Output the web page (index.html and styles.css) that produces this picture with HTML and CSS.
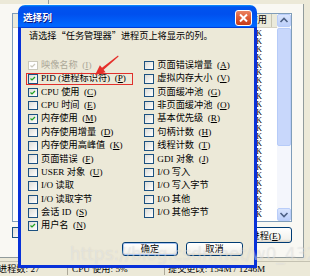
FILE: index.html
```html
<!DOCTYPE html>
<html lang="zh-CN">
<head>
    <meta charset="UTF-8">
    <title>选择列</title>
    <link rel="stylesheet" href="styles.css">
</head>
<body>
    <!-- Task manager window behind the dialog -->
    <div class="taskmgr">
        <div class="tabs"><span class="tab"></span></div>
        <div class="page">
            <div class="proc-list">
                <div class="list-main">
                    <div class="list-head"><span class="col-mem">内存使用</span><span class="col-next"></span></div>
                    <div class="list-rows">
                        <div class="row">3,120 K</div>
                        <div class="row">1,884 K</div>
                        <div class="row">22,516 K</div>
                        <div class="row">4,032 K</div>
                        <div class="row">268 K</div>
                        <div class="row">5,904 K</div>
                        <div class="row">2,412 K</div>
                        <div class="row">1,156 K</div>
                        <div class="row">7,368 K</div>
                        <div class="row">3,588 K</div>
                        <div class="row">18,240 K</div>
                        <div class="row">4,816 K</div>
                        <div class="row">940 K</div>
                        <div class="row">2,736 K</div>
                        <div class="row">6,104 K</div>
                        <div class="row">1,492 K</div>
                        <div class="row">3,012 K</div>
                        <div class="row">12,660 K</div>
                        <div class="row">2,200 K</div>
                        <div class="row">1,708 K</div>
                        <div class="row">5,520 K</div>
                        <div class="row">884 K</div>
                        <div class="row">3,344 K</div>
                        <div class="row">1,076 K</div>
                    </div>
                </div>
                <div class="scrollbar">
                    <div class="sb-btn"><svg width="14" height="13" viewBox="0 0 14 13"><path d="M3.5 8 L7 4.5 L10.5 8" fill="none" stroke="#4d6185" stroke-width="1.6"/></svg></div>
                    <div class="sb-track"><div class="sb-thumb"></div></div>
                    <div class="sb-btn"><svg width="14" height="13" viewBox="0 0 14 13"><path d="M3.5 5 L7 8.5 L10.5 5" fill="none" stroke="#4d6185" stroke-width="1.6"/></svg></div>
                </div>
            </div>
            <div class="page-foot">
                <span class="box"></span>
                <button type="button" class="xp-btn end-proc">结束进程(<u>E</u>)</button>
            </div>
        </div>
        <div class="statusbar">
            <span class="panel p-count">进程数: 27</span>
            <span class="panel p-cpu">CPU 使用: 5%</span>
            <span class="panel p-mem">提交更改: 154M / 1246M</span>
        </div>
    </div>

    <!-- 选择列 dialog -->
    <div class="dialog">
        <div class="dlg-title">
            <span class="dlg-title-text">选择列</span>
            <span class="dlg-close"><svg width="15" height="14" viewBox="0 0 15 14"><path d="M4 3.5 L11 10.5 M11 3.5 L4 10.5" stroke="#fff" stroke-width="2"/></svg></span>
        </div>
        <div class="dlg-body">
            <div class="intro">请选择<span class="q">“</span>任务管理器<span class="q">”</span>进程页上将显示的列。</div>
            <div class="options">
                <div class="opt disabled"><span class="box"><svg viewBox="0 0 10 10"><path d="M2 4.6 L4 6.6 L8 2.6" fill="none" stroke="#cac8bb" stroke-width="1.7"/></svg></span>映像名称<span class="key">(<u>I</u>)</span></div>
                <div class="opt"><span class="box"><svg viewBox="0 0 10 10"><path d="M2 4.6 L4 6.6 L8 2.6" fill="none" stroke="#21a121" stroke-width="1.7"/></svg></span>PID (进程标识符)<span class="key">(<u>P</u>)</span></div>
                <div class="opt"><span class="box"><svg viewBox="0 0 10 10"><path d="M2 4.6 L4 6.6 L8 2.6" fill="none" stroke="#21a121" stroke-width="1.7"/></svg></span>CPU 使用<span class="key">(<u>C</u>)</span></div>
                <div class="opt"><span class="box"></span>CPU 时间<span class="key">(<u>E</u>)</span></div>
                <div class="opt"><span class="box"><svg viewBox="0 0 10 10"><path d="M2 4.6 L4 6.6 L8 2.6" fill="none" stroke="#21a121" stroke-width="1.7"/></svg></span>内存使用<span class="key">(<u>M</u>)</span></div>
                <div class="opt"><span class="box"></span>内存使用增量<span class="key">(<u>D</u>)</span></div>
                <div class="opt"><span class="box"></span>内存使用高峰值<span class="key">(<u>K</u>)</span></div>
                <div class="opt"><span class="box"></span>页面错误<span class="key">(<u>F</u>)</span></div>
                <div class="opt"><span class="box"></span>USER 对象<span class="key">(<u>U</u>)</span></div>
                <div class="opt"><span class="box"></span>I/O 读取</div>
                <div class="opt"><span class="box"></span>I/O 读取字节</div>
                <div class="opt"><span class="box"></span>会话 ID<span class="key">(<u>S</u>)</span></div>
                <div class="opt"><span class="box"><svg viewBox="0 0 10 10"><path d="M2 4.6 L4 6.6 L8 2.6" fill="none" stroke="#21a121" stroke-width="1.7"/></svg></span>用户名<span class="key">(<u>N</u>)</span></div>

                <div class="opt"><span class="box"></span>页面错误增量<span class="key">(<u>A</u>)</span></div>
                <div class="opt"><span class="box"></span>虚拟内存大小<span class="key">(<u>V</u>)</span></div>
                <div class="opt"><span class="box"></span>页面缓冲池<span class="key">(<u>G</u>)</span></div>
                <div class="opt"><span class="box"></span>非页面缓冲池<span class="key">(<u>O</u>)</span></div>
                <div class="opt"><span class="box"></span>基本优先级<span class="key">(<u>R</u>)</span></div>
                <div class="opt"><span class="box"></span>句柄计数<span class="key">(<u>H</u>)</span></div>
                <div class="opt"><span class="box"></span>线程计数<span class="key">(<u>T</u>)</span></div>
                <div class="opt"><span class="box"></span>GDI 对象<span class="key">(<u>J</u>)</span></div>
                <div class="opt"><span class="box"></span>I/O 写入</div>
                <div class="opt"><span class="box"></span>I/O 写入字节</div>
                <div class="opt"><span class="box"></span>I/O 其他</div>
                <div class="opt"><span class="box"></span>I/O 其他字节</div>
            </div>
            <div class="dlg-buttons">
                <button type="button" class="xp-btn ok">确定</button>
                <button type="button" class="xp-btn cancel">取消</button>
            </div>
        </div>
    </div>

    <!-- Annotation marks -->
    <div class="mark-box"></div>
    <svg class="mark-arrow" width="32" height="24" viewBox="0 0 32 24">
        <polygon points="3,22 7.9,12.2 10,14.7 26,2.6 26.6,3.4 11.6,16.7 13.6,19.2" fill="#e5302b"/>
    </svg>
    <div class="watermark">https://blog.csdn.net/w0_43216</div>
</body>
</html>
```

FILE: styles.css
```css
* {
    box-sizing: border-box;
}
html, body {
    margin: 0;
}
body {
    position: relative;
    width: 310px;
    height: 276px;
    overflow: hidden;
    background: #ece9d8;
    font-family: "Liberation Serif", "Noto Sans CJK SC", serif;
    font-size: 9.2px;
    color: #000;
    text-autospace: no-autospace;
}
u {
    text-decoration-thickness: 1px;
}
.key {
    font-family: "Liberation Serif", serif;
    margin-left: 1px;
}

/* Task manager behind */
.taskmgr {
    display: flex;
    flex-direction: column;
    height: 276px;
}
.tabs {
    height: 4px;
}
.tab {
    display: block;
    width: 49px;
    height: 4px;
    border-right: 1px solid #919b9c;
}
.page {
    height: 254px;
    margin-right: 6px;
    padding: 9px 0 0 12px;
    background: #f9f8f3;
    border-right: 1px solid #919b9c;
    border-bottom: 1px solid #919b9c;
}
.proc-list {
    display: flex;
    width: 280px;
    height: 209px;
    background: #fff;
    border: 1px solid #7f9db9;
}
.list-main {
    flex: 1;
    display: flex;
    flex-direction: column;
    overflow: hidden;
}
.list-head {
    display: flex;
    height: 14px;
    background: #ebeadb;
    border-bottom: 1px solid #d6d2c2;
}
.col-mem {
    width: 259px;
    padding-right: 4px;
    text-align: right;
    line-height: 13px;
    border-right: 1px solid #c7c5b2;
}
.col-next {
    flex: 1;
}
.list-rows {
    padding-top: 2px;
}
.row {
    width: 259px;
    padding-right: 10px;
    text-align: right;
    font-size: 8px;
    line-height: 7.9px;
    height: 7.9px;
}
.scrollbar {
    display: flex;
    flex-direction: column;
    width: 14px;
    background: #fdfdfb;
}
.sb-btn {
    height: 13px;
    background: linear-gradient(#d8e4fd, #bccffa);
    border: 1px solid #b9cdf9;
    border-radius: 2px;
}
.sb-btn svg {
    display: block;
    margin: -1px;
}
.sb-track {
    flex: 1;
    padding-top: 1px;
    background: #f4f6fc;
}
.sb-thumb {
    height: 118px;
    background: #c8d7fb;
    border: 1px solid #b6cbf8;
    border-radius: 2px;
}
.page-foot {
    display: flex;
    justify-content: space-between;
    align-items: flex-start;
    width: 280px;
    margin-top: 5px;
}
.page-foot .box {
    width: 11px;
    height: 11px;
}
.end-proc {
    width: 71px;
    height: 16px;
}
.statusbar {
    display: flex;
    align-items: center;
    height: 15px;
    margin-top: 3px;
    border-top: 1px solid #c5c2b2;
    white-space: nowrap;
}
.panel {
    line-height: 12px;
    border-right: 1px solid #aca899;
}
.p-count {
    width: 70px;
    margin-left: -2px;
}
.p-cpu {
    width: 97px;
    padding-left: 4px;
}
.p-mem {
    padding-left: 3px;
    border-right: 0;
}

/* Checkbox */
.box {
    display: inline-block;
    flex: none;
    width: 9.5px;
    height: 9.5px;
    border: 1px solid #1c5180;
    background: linear-gradient(135deg, #dcdcd7, #fff);
}
.box svg {
    display: block;
    width: 100%;
    height: 100%;
}

/* XP push button */
.xp-btn {
    padding: 0;
    font: inherit;
    color: #000;
    border: 1px solid #003c74;
    border-radius: 3px;
    background: linear-gradient(#fff, #f3f2ed 80%, #d9d4c8);
}

/* Dialog */
.dialog {
    position: absolute;
    left: 18px;
    top: 5px;
    width: 239px;
    height: 263px;
    display: flex;
    flex-direction: column;
}
.dlg-title {
    display: flex;
    justify-content: space-between;
    height: 23px;
    padding: 0 5px 0 5px;
    border-radius: 7px 7px 0 0;
    background: linear-gradient(180deg, #0997ff, #0053ee 8%, #0050ee 40%, #06f 88%, #06f 93%, #005bff 95%, #003dd7 96%, #003dd7);
}
.dlg-title-text {
    padding-top: 6px;
    font-family: "Noto Sans CJK SC", sans-serif;
    font-weight: bold;
    font-size: 9.6px;
    line-height: 13px;
    color: #fff;
    text-shadow: 1px 1px #0a1883;
}
.dlg-close {
    width: 17px;
    height: 16px;
    margin-top: 5px;
    padding: 0;
    border: 1px solid #fff;
    border-radius: 3px;
    background: linear-gradient(#ec8563, #dc5a35 50%, #c53c1b);
}
.dlg-close svg {
    display: block;
}
.dlg-body {
    flex: 1;
    display: flex;
    flex-direction: column;
    padding: 1.5px 0 0 7px;
    background: #ece9d8;
    border: 3px solid #0831d9;
    border-top: 0;
}
.intro {
    height: 11px;
    margin-left: 1px;
    line-height: 11px;
    white-space: nowrap;
}
.q {
    font-family: "Noto Sans CJK SC", sans-serif;
    font-feature-settings: "fwid";
}
.options {
    display: grid;
    grid-template-columns: 116.3px 1fr;
    grid-template-rows: repeat(13, 13.4px);
    grid-auto-flow: column;
    margin-top: 18.3px;
}
.opt {
    display: flex;
    align-items: center;
    gap: 3.5px;
    white-space: nowrap;
    line-height: 13.4px;
}
.opt.disabled {
    color: #aca899;
}
.opt.disabled .box {
    border-color: #cac8bb;
    background: #fff;
}
.dlg-buttons {
    display: flex;
    justify-content: flex-end;
    gap: 8px;
    margin-top: 9.5px;
    padding-right: 11px;
}
.dlg-buttons .xp-btn {
    height: 14px;
    line-height: 12px;
}
.ok {
    width: 56px;
    box-shadow: inset 0 0 0 1px #a9c3f0;
}
.cancel {
    width: 57px;
}

/* Annotations over the screenshot */
.mark-box {
    position: absolute;
    left: 26px;
    top: 72.5px;
    width: 107px;
    height: 12.5px;
    border: 1.5px solid #e0302c;
}
.mark-arrow {
    position: absolute;
    left: 92px;
    top: 53px;
}
.watermark {
    position: absolute;
    left: 70px;
    top: 244px;
    font-family: "DejaVu Sans", sans-serif;
    font-size: 17px;
    color: rgba(255, 255, 255, 0.35);
    text-shadow: 0 0 1px rgba(140, 140, 140, 0.25);
    white-space: nowrap;
}
```
